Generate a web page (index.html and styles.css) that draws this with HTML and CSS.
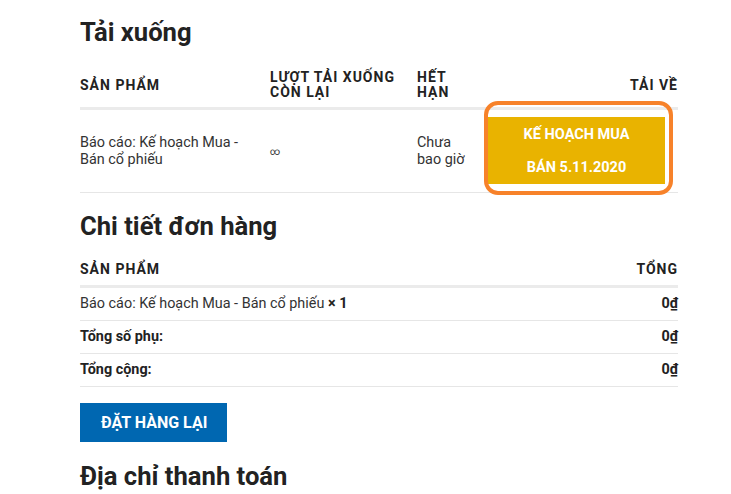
FILE: index.html
```html
<!DOCTYPE html>
<html lang="vi">
<head>
  <meta charset="UTF-8">
  <title>Đơn hàng | Tải xuống</title>
  <link rel="stylesheet" href="styles.css">
</head>
<body>

  <div class="page">

    <h2>Tải xuống</h2>

    <table class="downloads">
      <colgroup>
        <col class="c-product">
        <col class="c-remain">
        <col class="c-expire">
        <col>
      </colgroup>
      <thead>
        <tr>
          <th>Sản phẩm</th>
          <th>Lượt tải xuống còn lại</th>
          <th>Hết hạn</th>
          <th class="right">Tải về</th>
        </tr>
      </thead>
      <tbody>
        <tr>
          <td>Báo cáo: Kế hoạch Mua - Bán cổ phiếu</td>
          <td><span class="inf">∞</span></td>
          <td>Chưa bao giờ</td>
          <td class="right"><a class="file-btn" href="#">Kế hoạch Mua<br>Bán 5.11.2020</a></td>
        </tr>
      </tbody>
    </table>

    <h2>Chi tiết đơn hàng</h2>

    <table class="details">
      <thead>
        <tr>
          <th>Sản phẩm</th>
          <th class="right">Tổng</th>
        </tr>
      </thead>
      <tbody>
        <tr>
          <td>Báo cáo: Kế hoạch Mua - Bán cổ phiếu <strong>× 1</strong></td>
          <td class="right"><strong>0₫</strong></td>
        </tr>
        <tr>
          <td><strong>Tổng số phụ:</strong></td>
          <td class="right"><strong>0₫</strong></td>
        </tr>
        <tr>
          <td><strong>Tổng cộng:</strong></td>
          <td class="right"><strong>0₫</strong></td>
        </tr>
      </tbody>
    </table>

    <a class="order-again" href="#">Đặt hàng lại</a>

    <h2 class="last">Địa chỉ thanh toán</h2>

  </div>

</body>
</html>
```

FILE: styles.css
```css
body {
  font-family: Roboto, "Noto Sans", Arial, sans-serif;
  background: white;
  color: #333;
  margin: 0;
  padding: 17px 0 0 80px;
  font-size: 14.4px;
}

.page {
  width: 598px;
}

h2 {
  color: #222;
  font-size: 25.6px;
  line-height: 31px;
  font-weight: bold;
  margin: 0 0 15px;
}

table {
  width: 100%;
  border-collapse: collapse;
  table-layout: fixed;
}

th {
  text-align: left;
  text-transform: uppercase;
  font-size: 14px;
  line-height: 15px;
  letter-spacing: 1px;
  color: #222;
  font-weight: bold;
  padding: 7px 12px 7px 0;
  border-bottom: 3px solid #ebebeb;
  vertical-align: middle;
}

td {
  line-height: 17px;
  padding: 7px 12px 8px 0;
  border-bottom: 1px solid #e6e6e6;
  vertical-align: middle;
}

.right {
  text-align: right;
  padding-right: 0;
}

.c-product { width: 190px; }
.c-remain { width: 147px; }
.c-expire { width: 66px; }

.inf {
  font-size: 10px;
}

.file-btn {
  position: relative;
  display: inline-block;
  vertical-align: middle;
  width: 177px;
  margin-right: 13px;
  background: #e9b300;
  color: white;
  text-decoration: none;
  text-transform: uppercase;
  text-align: center;
  font-size: 14.5px;
  font-weight: bold;
  line-height: 33px;
  padding: 1px 0 0;
}

/* highlight ring round the download button */
.file-btn::after {
  content: "";
  position: absolute;
  top: -16px;
  left: -4px;
  right: -8px;
  bottom: -11px;
  border: 4px solid #f7822a;
  border-radius: 14px;
}

.details + .order-again {
  margin-top: 16px;
}

table + h2 {
  margin-top: 18px;
}

.details th {
  padding: 5px 0 8px;
}

.details td {
  line-height: 18px;
  padding: 7px 0;
}

.details strong {
  color: #222;
}

.order-again {
  display: inline-block;
  background: #0067b1;
  color: white;
  text-decoration: none;
  text-transform: uppercase;
  font-size: 16px;
  font-weight: bold;
  line-height: 39px;
  padding: 0 20px 0 21px;
}

h2.last {
  margin-top: 19px;
}
```
